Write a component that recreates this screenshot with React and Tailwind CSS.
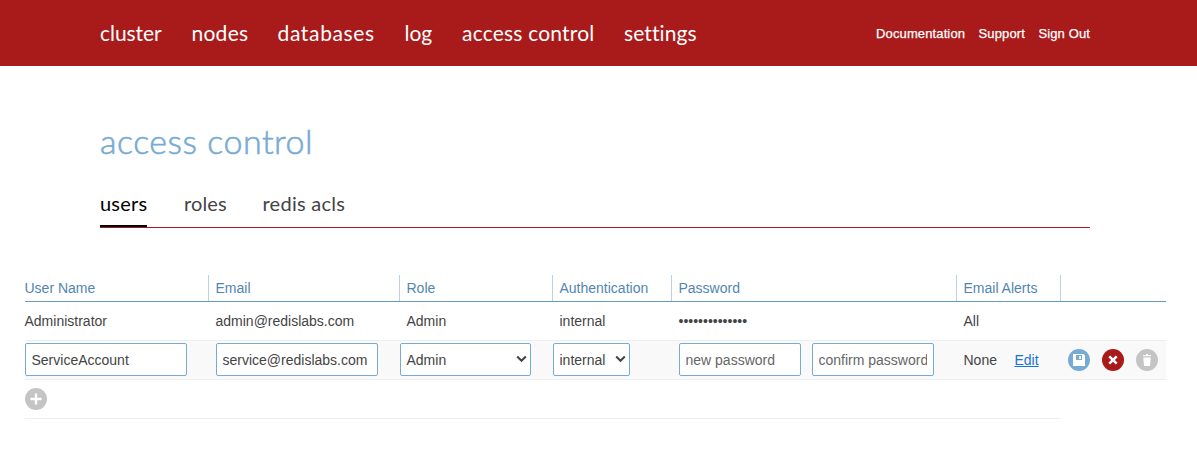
import React from "react";

const nav = [
  { label: "cluster", style: "w-[91.5px] tracking-[-0.05px]" },
  { label: "nodes", style: "w-[86px] tracking-[0.25px]" },
  { label: "databases", style: "w-[127px] tracking-[0.65px]" },
  { label: "log", style: "w-[57.5px] tracking-[0px]" },
  { label: "access control", style: "w-[162px] tracking-[0.2px]" },
  { label: "settings", style: "w-[80px] tracking-[0.1px]" },
];

const field =
  "h-[33px] shrink-0 rounded-[2px] border border-[#78abd4] bg-white pt-px pr-1.5 pl-[5.5px] text-sm text-[#444] outline-none placeholder:text-[#666]";
const grid = "grid grid-cols-[184px_191px_153px_119px_285px_104px_105px]";
const heading = "flex items-center border-r border-[#bdd1e2] pl-[6.5px]";

function Select({ value, width }) {
  return (
    <div className={`${field} ${width} flex items-center justify-between`}>
      <span>{value}</span>
      <svg className="-mt-0.5 -mr-[3px]" width="11" height="8" viewBox="0 0 11 8" fill="none" stroke="#444" strokeWidth="2">
        <path d="M1.2 1.5 5.5 5.8 9.8 1.5" />
      </svg>
    </div>
  );
}

function RoundButton({ label, color, children }) {
  return (
    <button aria-label={label} className={`size-[22px] shrink-0 rounded-full ${color}`}>
      <svg width="22" height="22" viewBox="0 0 22 22">
        {children}
      </svg>
    </button>
  );
}

export default function App() {
  return (
    <div className="h-[453px] w-[1197px] overflow-hidden bg-white font-['Liberation_Sans',Arial,sans-serif] text-sm text-[#444]">
      <header className="flex h-[66px] items-center bg-[#a91a1a] pr-[107px] pl-[100px] text-white">
        <nav className="flex pb-px font-[Lato,sans-serif] text-[21px] leading-[28px] [font-variant-ligatures:none]">
          {nav.map((n) => (
            <a key={n.label} className={`whitespace-nowrap ${n.style}`}>
              {n.label}
            </a>
          ))}
        </nav>
        <div className="ml-auto flex gap-[13.5px] pt-[2px] text-[13px] tracking-[0.12px] [-webkit-text-stroke:0.25px_white]">
          <a>Documentation</a>
          <a>Support</a>
          <a>Sign Out</a>
        </div>
      </header>

      <div className="mx-[100px] w-[990px] pt-[53px] font-[Lato,sans-serif]">
        <h1 className="h-11 text-[34px] leading-[44px] font-light tracking-[0.5px] text-[#78abd4] [-webkit-text-stroke:0.6px_#78abd4]">
          access control
        </h1>
        <div className="mt-[22px] flex h-[43px] items-stretch border-b border-[#a91a1a] text-[20px] leading-[36px]">
          <a className="mr-[37px] w-[47px] border-b-2 border-black tracking-[0.2px] text-black">users</a>
          <a className="mr-[35.5px] w-[43px] tracking-[0.1px]">roles</a>
          <a className="tracking-[0.25px] whitespace-nowrap">redis acls</a>
        </div>
      </div>

      <div className="mt-[47px] ml-[25px] w-[1141px]">
        <div className={`${grid} h-[27px] border-b border-[#6699c0] text-[#5286b0]`}>
          <div className="-ml-[0.5px] flex items-center border-r border-[#bdd1e2]">User Name</div>
          <div className={heading}>Email</div>
          <div className={heading}>Role</div>
          <div className={heading}>Authentication</div>
          <div className={heading}>Password</div>
          <div className={heading}>Email Alerts</div>
        </div>

        <div className={`${grid} h-[39px] items-center border-b border-[#eee]`}>
          <div className="-ml-[0.5px]">Administrator</div>
          <div className="pl-[6.5px]">admin@redislabs.com</div>
          <div className="pl-[6.5px]">Admin</div>
          <div className="pl-[6.5px]">internal</div>
          <div className="pl-[6.5px]">••••••••••••••</div>
          <div className="pl-[6.5px]">All</div>
        </div>

        <div className={`${grid} h-[39px] items-start border-b border-[#eee] bg-[#f9f9f9] pt-[2px]`}>
          <input className={`${field} w-[162px]`} defaultValue="ServiceAccount" />
          <input className={`${field} ml-[7px] w-[162px]`} defaultValue="service@redislabs.com" />
          <Select value="Admin" width="w-[131px]" />
          <Select value="internal" width="w-[77px]" />
          <div className="flex gap-[11px] pl-[7px]">
            <input className={`${field} w-[122px]`} placeholder="new password" />
            <input className={`${field} w-[122px]`} placeholder="confirm password" />
          </div>
          <div className="flex h-[34px] items-center pl-[6.5px]">
            <span className="w-[51px]">None</span>
            <a className="text-[#1a73d9] underline">Edit</a>
          </div>
          <div className="flex h-[34px] items-center gap-3 pl-[7px]">
            <RoundButton label="Save" color="bg-[#78abd4]">
              <path fill="#fff" d="M5 5h10.5L17 6.5V17H5z" />
              <path fill="#78abd4" d="M8 6h6v5H8z" />
              <path fill="#fff" d="M11.2 7h1.8v3h-1.8z" />
            </RoundButton>
            <RoundButton label="Cancel" color="bg-[#a91a1a]">
              <path d="M7.3 7.3l7.4 7.4M14.7 7.3l-7.4 7.4" stroke="#fff" strokeWidth="2.5" />
            </RoundButton>
            <RoundButton label="Delete" color="bg-[#c4c4c4]">
              <path fill="#fff" d="M7 6h3V5h2v1h3v1.3H7zM7.3 8.5h7.4L14 17H8z" />
            </RoundButton>
          </div>
        </div>

        <div className="flex h-[39px] w-[1036px] items-center border-b border-[#eee]">
          <RoundButton label="Add user" color="bg-[#c4c4c4]">
            <path d="M11 5.5v11M5.5 11h11" stroke="#fff" strokeWidth="2.4" />
          </RoundButton>
        </div>
      </div>
    </div>
  );
}
